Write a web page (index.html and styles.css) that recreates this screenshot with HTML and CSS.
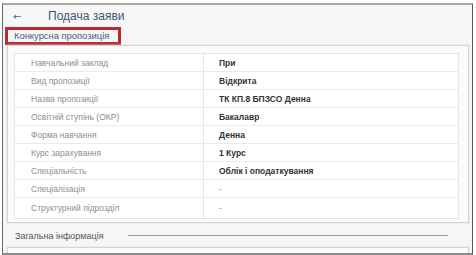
FILE: index.html
```html
<!DOCTYPE html>
<html>
<head>
<meta charset="utf-8">
<link rel="stylesheet" href="styles.css">
</head>
<body>
<div class="frame">
  <div class="header">
    <span class="back">&#8592;</span>
    <span class="title">Подача заяви</span>
  </div>
  <div class="tab">Конкурсна пропозиція</div>
  <div class="panel">
    <div class="table">
      <div class="row"><div class="lbl">Навчальний заклад</div><div class="val">При</div></div>
      <div class="row"><div class="lbl">Вид пропозиції</div><div class="val">Відкрита</div></div>
      <div class="row"><div class="lbl">Назва пропозиції</div><div class="val">ТК КП.8 БПЗСО Денна</div></div>
      <div class="row"><div class="lbl">Освітній ступінь (ОКР)</div><div class="val">Бакалавр</div></div>
      <div class="row"><div class="lbl">Форма навчання</div><div class="val">Денна</div></div>
      <div class="row"><div class="lbl">Курс зарахування</div><div class="val">1 Курс</div></div>
      <div class="row"><div class="lbl">Спеціальність</div><div class="val">Облік і оподаткування</div></div>
      <div class="row"><div class="lbl">Спеціалізація</div><div class="val plain">-</div></div>
      <div class="row last"><div class="lbl">Структурний підрозділ</div><div class="val plain">-</div></div>
    </div>
  </div>
  <div class="section">
    <span class="section-title">Загальна інформація</span>
    <span class="section-line"></span>
  </div>
  <div class="panel2"></div>
</div>
</body>
</html>
```
FILE: styles.css
```css
html, body {
  margin: 0;
  padding: 0;
  background: #ffffff;
}
body {
  font-family: "Liberation Sans", Arial, sans-serif;
}
.frame {
  box-sizing: border-box;
  margin: 3px 3px 0 2px;
  height: 252px;
  border-top: 2px solid #a8a8a8;
  border-left: 1px solid #6a6a6a;
  border-right: 1px solid #5a5a5a;
  border-bottom: 2px solid #8a8a8a;
  background: #f6f6f6;
  overflow: hidden;
}
.header {
  display: flex;
  align-items: center;
  height: 22px;
  padding-left: 10px;
}
.back {
  color: #3e6a80;
  font-family: "DejaVu Sans", sans-serif;
  font-size: 10px;
  width: 35px;
}
.title {
  color: #3e5670;
  font-family: "Liberation Sans", Arial, sans-serif;
  font-size: 12px;
}
.tab {
  margin-left: 2px;
  width: 104px;
  height: 12px;
  border: 3px solid #c0282f;
  color: #41637e;
  font-size: 9.4px;
  line-height: 12px;
  padding-left: 6px;
  box-sizing: content-box;
  white-space: nowrap;
}
.panel {
  margin: 0 3px 0 4px;
  background: #fbfbfb;
  border: 1px solid #c6d6e3;
  box-shadow: 0 0 2px #d8e2ea;
  padding: 7px 9px 3px 6px;
}
.table {
  background: #ffffff;
  border: 1px solid #e6e6e6;
}
.row {
  display: flex;
  height: 18px;
  border-bottom: 1px solid #ebebeb;
  box-sizing: border-box;
  font-size: 8.5px;
  line-height: 18px;
}
.row.last {
  border-bottom: none;
  height: 20px;
  line-height: 20px;
}
.lbl {
  width: 189px;
  box-sizing: border-box;
  padding-left: 16px;
  color: #8e8e8e;
  border-right: 1px solid #e6e6e6;
}
.val {
  flex: 1;
  padding-left: 15px;
  color: #333333;
  font-weight: bold;
}
.val.plain {
  font-weight: normal;
  color: #999999;
}
.section {
  display: flex;
  align-items: center;
  height: 23px;
  padding-top: 1px;
  padding-left: 12px;
  padding-right: 24px;
}
.section-title {
  color: #555555;
  font-size: 9px;
}
.section-line {
  flex: 1;
  height: 1px;
  background: #9a9a9a;
  margin-left: 24px;
}
.panel2 {
  margin: 0 3px 0 4px;
  height: 20px;
  background: #fbfbfb;
  border: 1px solid #c6d6e3;
  box-shadow: 0 0 2px #d8e2ea;
}
```
